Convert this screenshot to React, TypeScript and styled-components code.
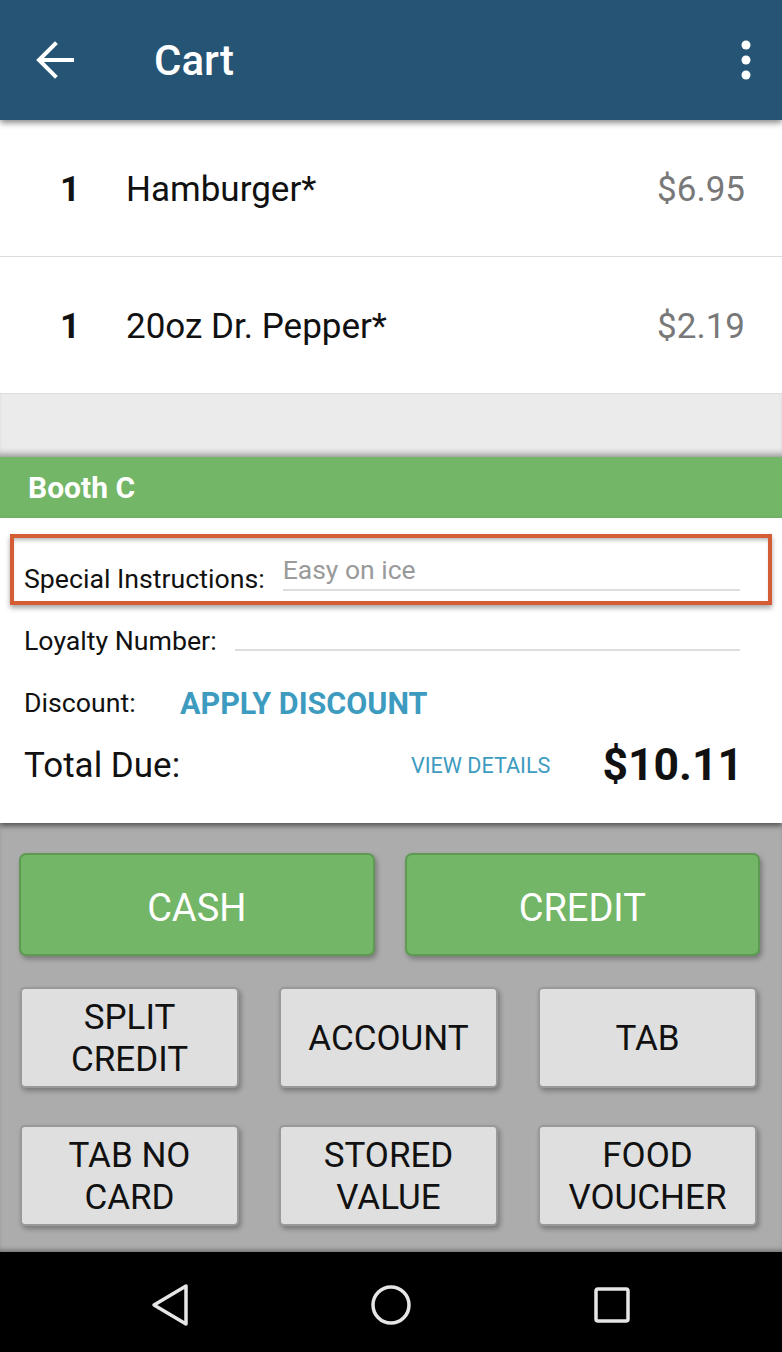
import React from "react";
import styled, { createGlobalStyle } from "styled-components";

const Global = createGlobalStyle`
  html, body { margin: 0; padding: 0; }
  body { font-family: Roboto, "Noto Sans", sans-serif; background: #000; }
  * { box-sizing: border-box; }
`;

const Screen = styled.div`
  width: 782px;
  height: 1352px;
  display: flex;
  flex-direction: column;
  background: #ebebeb;
  overflow: hidden;
`;

const Header = styled.header`
  height: 120px;
  flex: 0 0 120px;
  background: #255475;
  display: flex;
  align-items: center;
  padding: 0 30px 0 36px;
  position: relative;
  z-index: 3;
  box-shadow: 0 3px 6px rgba(0, 0, 0, 0.45);
`;

const IconBtn = styled.div<{ $w: number }>`
  display: flex;
  align-items: center;
  justify-content: center;
  width: ${(p) => p.$w}px;
`;

const Title = styled.h1`
  margin: 0 0 0 80px;
  flex: 1;
  color: #fff;
  font-size: 42px;
  font-weight: 500;
  letter-spacing: 0;
`;

const ItemList = styled.div`
  background: #fff;
  display: flex;
  flex-direction: column;
`;

const ItemRow = styled.div`
  height: 137px;
  display: flex;
  align-items: center;
  padding: 2px 37px 0 60px;
  border-bottom: 1px solid #dcdcdc;
  font-size: 35px;
`;

const Qty = styled.span`
  width: 66px;
  font-weight: 700;
  color: #111;
`;

const ItemName = styled.span`
  flex: 1;
  color: #111;
`;

const Price = styled.span`
  color: #787878;
`;

const Spacer = styled.div`
  height: 63px;
  background: #ebebeb;
  box-shadow: inset 0 -7px 6px -4px rgba(0, 0, 0, 0.35);
`;

const TableBar = styled.div`
  height: 61px;
  background: #74b667;
  color: #fff;
  font-weight: 700;
  font-size: 30px;
  display: flex;
  align-items: center;
  padding-left: 28px;
`;

const Panel = styled.div`
  height: 305px;
  background: #fff;
  display: flex;
  flex-direction: column;
  padding-top: 16px;
  position: relative;
  z-index: 2;
  box-shadow: 0 3px 5px rgba(0, 0, 0, 0.5);
`;

const Highlight = styled.div`
  margin: 0 10px;
  height: 71px;
  border: 4px solid #d55d35;
  box-shadow: 0 3px 5px rgba(0, 0, 0, 0.35), inset 0 4px 4px -2px rgba(0, 0, 0, 0.3);
  display: flex;
  align-items: flex-end;
  padding: 0 28px 6px 10px;
`;

const FieldRow = styled.div<{ $h: number }>`
  height: ${(p) => p.$h}px;
  display: flex;
  align-items: center;
  padding: 0 39px 0 24px;
`;

const Label = styled.span<{ $w?: number }>`
  font-size: 26.7px;
  color: #111;
  flex: 0 0 ${(p) => (p.$w ? `${p.$w}px` : "auto")};
`;

const InputLine = styled.div<{ $offset: number }>`
  flex: 1;
  align-self: stretch;
  margin-left: ${(p) => p.$offset}px;
  margin-bottom: 4px;
  border-bottom: 2px solid #dedede;
  display: flex;
  align-items: flex-end;
  padding-bottom: 4px;
  font-size: 26.5px;
  color: #9a9a9a;
`;

const LoyaltyLine = styled.div`
  flex: 1;
  margin-left: 18px;
  margin-right: 3px;
  margin-top: 18px;
  border-bottom: 2px solid #dedede;
`;

const Link = styled.span<{ $size: number; $bold?: boolean }>`
  color: #3d9bc0;
  font-size: ${(p) => p.$size}px;
  font-weight: ${(p) => (p.$bold ? 700 : 400)};
`;

const TotalLabel = styled.span`
  flex: 1;
  font-size: 35px;
  color: #111;
`;

const TotalValue = styled.span`
  font-size: 44.5px;
  font-weight: 700;
  color: #111;
  margin-left: 52px;
`;

const Payments = styled.div`
  flex: 1;
  background: #acacac;
  padding: 30px 22px 0 19px;
  display: flex;
  flex-direction: column;
  gap: 31px;
  box-shadow: inset 0 -4px 4px -2px rgba(0, 0, 0, 0.35);
`;

const BigRow = styled.div`
  display: grid;
  grid-template-columns: 1fr 1fr;
  column-gap: 30px;
`;

const BigButton = styled.button`
  height: 103px;
  border-radius: 7px;
  border: 2px solid #5e9a52;
  background: #74b667;
  color: #fff;
  font-family: Roboto, sans-serif;
  font-size: 38px;
  padding: 6px 0 0;
  box-shadow: 2px 3px 5px rgba(0, 0, 0, 0.3);
`;

const Grid = styled.div`
  display: grid;
  grid-template-columns: repeat(3, 219px);
  justify-content: space-between;
  row-gap: 37px;
  padding: 0 3px 0 1px;
`;

const SmallButton = styled.button`
  height: 101px;
  border-radius: 5px;
  border: 2px solid #999;
  background: #dfdfdf;
  color: #111;
  font-family: Roboto, sans-serif;
  font-size: 35px;
  line-height: 42px;
  padding: 2px 0 0;
  box-shadow: 2px 3px 5px rgba(0, 0, 0, 0.3);
`;

const NavBar = styled.nav`
  height: 100px;
  flex: 0 0 100px;
  background: #000;
  display: flex;
  align-items: center;
  justify-content: center;
  gap: 179px;
  padding-top: 6px;
`;

const BackArrow = () => (
  <svg width="38" height="38" viewBox="0 0 38 38">
    <path d="M36 19 H4 M19 3 L3 19 L19 35" fill="none" stroke="#fff" strokeWidth="4" strokeLinecap="square" />
  </svg>
);

const MoreDots = () => (
  <svg width="12" height="40" viewBox="0 0 12 40">
    <circle cx="6" cy="5" r="4.5" fill="#fff" />
    <circle cx="6" cy="20" r="4.5" fill="#fff" />
    <circle cx="6" cy="35" r="4.5" fill="#fff" />
  </svg>
);

const NavBack = () => (
  <svg width="40" height="44" viewBox="0 0 40 44">
    <path d="M36 3 L36 41 L4 22 Z" fill="none" stroke="#e6e6e6" strokeWidth="3.5" strokeLinejoin="round" />
  </svg>
);
const NavHome = () => (
  <svg width="44" height="44" viewBox="0 0 44 44">
    <circle cx="22" cy="22" r="18" fill="none" stroke="#e6e6e6" strokeWidth="3.5" />
  </svg>
);
const NavRecent = () => (
  <svg width="40" height="40" viewBox="0 0 40 40">
    <rect x="4" y="4" width="32" height="32" rx="2" fill="none" stroke="#e6e6e6" strokeWidth="3.5" />
  </svg>
);

const items = [
  { qty: 1, name: "Hamburger*", price: "$6.95" },
  { qty: 1, name: "20oz Dr. Pepper*", price: "$2.19" },
];

const small = [
  ["SPLIT", "CREDIT"],
  ["ACCOUNT"],
  ["TAB"],
  ["TAB NO", "CARD"],
  ["STORED", "VALUE"],
  ["FOOD", "VOUCHER"],
];

export default function App() {
  return (
    <Screen>
      <Global />
      <Header>
        <IconBtn $w={38}>
          <BackArrow />
        </IconBtn>
        <Title>Cart</Title>
        <IconBtn $w={12}>
          <MoreDots />
        </IconBtn>
      </Header>
      <ItemList>
        {items.map((it) => (
          <ItemRow key={it.name}>
            <Qty>{it.qty}</Qty>
            <ItemName>{it.name}</ItemName>
            <Price>{it.price}</Price>
          </ItemRow>
        ))}
      </ItemList>
      <Spacer />
      <TableBar>Booth C</TableBar>
      <Panel>
        <Highlight>
          <Label>Special Instructions:</Label>
          <InputLine $offset={18}>Easy on ice</InputLine>
        </Highlight>
        <FieldRow $h={72}>
          <Label>Loyalty Number:</Label>
          <LoyaltyLine />
        </FieldRow>
        <FieldRow $h={52}>
          <Label $w={156}>Discount:</Label>
          <Link $size={30.5} $bold>APPLY DISCOUNT</Link>
        </FieldRow>
        <FieldRow $h={72}>
          <TotalLabel>Total Due:</TotalLabel>
          <Link $size={21.6}>VIEW DETAILS</Link>
          <TotalValue>$10.11</TotalValue>
        </FieldRow>
      </Panel>
      <Payments>
        <BigRow>
          <BigButton>CASH</BigButton>
          <BigButton>CREDIT</BigButton>
        </BigRow>
        <Grid>
          {small.map((lines) => (
            <SmallButton key={lines.join(" ")}>
              {lines.map((l, i) => (
                <React.Fragment key={l}>
                  {i > 0 && <br />}
                  {l}
                </React.Fragment>
              ))}
            </SmallButton>
          ))}
        </Grid>
      </Payments>
      <NavBar>
        <NavBack />
        <NavHome />
        <NavRecent />
      </NavBar>
    </Screen>
  );
}
